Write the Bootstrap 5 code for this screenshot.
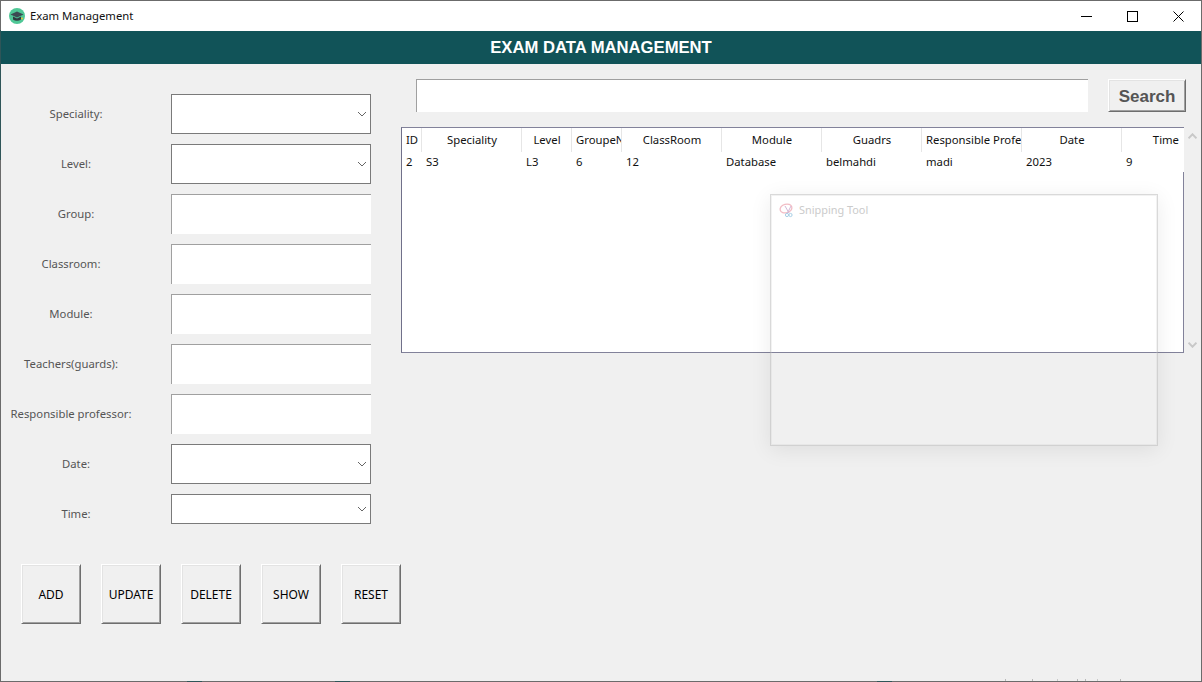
<!DOCTYPE html>
<html lang="en">
<head>
<meta charset="utf-8">
<title>Exam Management</title>
<link href="https://cdn.jsdelivr.net/npm/bootstrap@5.3.0/dist/css/bootstrap.min.css" rel="stylesheet">
<style>
html,body{margin:0;height:682px;overflow:hidden;background:#f0f0f0}
body{font-family:"Noto Sans","Liberation Sans",sans-serif;font-size:12px;color:#000}
.win{width:1202px;height:682px;border:1px solid #6b6b6b;position:relative;background:#f0f0f0}
.tbar{height:30px;background:#fff;padding-left:8px}
.tbar-title{font-size:11.3px;margin-left:5px;color:#111}
.wbtn{width:46px;height:30px}
.hdr{height:33px;padding-top:1px;background:#115358;color:#fff;font-family:"Liberation Sans",sans-serif;font-weight:700;font-size:16.65px}
.pane-left{width:400px;flex:none;padding-top:30px}
.frow{height:40px;margin-bottom:10px}
.frow-sm{margin-bottom:30px}
.flabel{width:170px;padding:0 20px 0 0;text-align:center;color:#555;font-size:11.3px;flex:none}
.flabel-off{padding-right:30px}
.fbox{width:200px;height:100%;background:#fff;flex:none}
.fbox-short{height:30px;align-self:flex-start}
.fbox-sel{border:1px solid #7a7a7a;padding-right:3px}
.fbox-txt{border-top:1px solid #a0a0a0;border-left:1px solid #a0a0a0}
.btnrow{gap:20px;padding-left:20px}
.winbtn{width:60px;height:60px;flex:none;padding:1px 0 0;border-radius:0;background:#f0f0f0;font-size:12px;color:#000;border:1px solid;border-color:#fff #6e6e6e #6e6e6e #fff;box-shadow:inset 1px 1px 0 #e3e3e3,inset -1px -1px 0 #a0a0a0}
.pane-right{flex:1;padding-top:15px}
.srch{padding-left:15px;height:33px}
.srch-in{width:672px;height:33px;background:#fff;border-top:1px solid #a0a0a0;border-left:1px solid #a0a0a0}
.srch-btn{width:78px;height:33px;margin-left:20px;padding:2px 0 0;border-radius:0;background:#f0f0f0;color:#555;font-family:"Liberation Sans",sans-serif;font-weight:700;font-size:17px;border:1px solid;border-color:#fff #6e6e6e #6e6e6e #fff;box-shadow:inset 1px 1px 0 #e3e3e3,inset -1px -1px 0 #a0a0a0}
.tblwrap{margin-top:15px}
.tbox{width:783px;height:226px;flex:none;background:#fff;border:1px solid #82829a;border-left-color:#70708a}
.tcell{flex:none;padding:0 3px 0 4px;overflow:hidden;white-space:nowrap;color:#111;font-size:11.3px}
.thead-row{height:24px;line-height:24px;margin-right:-1px;position:relative;background:#fff}
.thead-row .tcell{text-align:center;border-right:1px solid #e6e6e6}
.tbody-row{height:20px;line-height:20px;margin-right:-1px;position:relative;background:#fff}
.w20{width:20px}.w50{width:50px}.w100{width:100px}.wlast{width:62px}
.thead-row .wlast{text-align:right;border-right:0;padding-right:5px}
.sbar{width:16px;height:226px;padding:6px 0 5px}
.ghost{position:absolute;left:769px;top:193px;width:388px;height:252px;border:1px solid rgba(170,170,170,.45);box-shadow:inset 0 0 0 1px rgba(205,205,205,.25),0 4px 20px rgba(0,0,0,.08)}
.ghost-title{color:#cbcbcb;font-size:10.9px;padding:7px 0 0 8px;gap:4px}
.bleed{position:absolute;height:1px;bottom:-1px}
.bl-a{left:186px;width:15px;background:#2f5558}
.bl-b{left:334px;width:15px;background:#2f5558}
.bl-c{left:876px;width:15px;background:#2f5558}
.spk{position:absolute;left:1004px;bottom:0;width:1px;height:2px;background:#b8b8b8;box-shadow:27px 0 #b8b8b8,52px 0 #c8c8c8,72px 0 #b8b8b8,80px 0 #b8b8b8,92px 0 #c8c8c8,115px 0 #b8b8b8}
.edge-l{position:absolute;left:-1px;top:29px;width:1px;height:130px;background:#2f5558}
</style>
</head>
<body>
<div class="win">
  <div class="tbar d-flex align-items-center">
    <svg width="16" height="16" viewBox="0 0 16 16"><circle cx="8" cy="8" r="8" fill="#4fc796"/><path d="M1.500 6.500 8 3.500l6.500 3L8 9.500z" fill="#3c4a52"/><path d="M4 8.500v3c2.500 1.800 5.500 1.800 8 0v-3L8 10.500z" fill="#2f3a40"/><circle cx="13" cy="10.500" r="1" fill="#e6c63a"/></svg>
    <span class="tbar-title">Exam Management</span>
    <div class="ms-auto d-flex">
      <div class="wbtn d-flex align-items-center justify-content-center"><svg width="11" height="11" viewBox="0 0 11 11"><path d="M0 5.500h11" stroke="#000"/></svg></div>
      <div class="wbtn d-flex align-items-center justify-content-center"><svg width="11" height="11" viewBox="0 0 11 11"><rect x=".5" y=".5" width="10" height="10" fill="none" stroke="#000"/></svg></div>
      <div class="wbtn d-flex align-items-center justify-content-center"><svg width="11" height="11" viewBox="0 0 11 11"><path d="M.5.500l10 10M10.500.500l-10 10" stroke="#000" fill="none"/></svg></div>
    </div>
  </div>
  <div class="hdr d-flex align-items-center justify-content-center">EXAM DATA MANAGEMENT</div>
  <div class="d-flex">
    <div class="pane-left">
      <div class="frow d-flex align-items-center"><div class="flabel">Speciality:</div><div class="fbox fbox-sel d-flex align-items-center justify-content-end"><svg width="11" height="6" viewBox="0 0 11 6"><path d="M2 1l4 4 4-4" fill="none" stroke="#666"/></svg></div></div>
      <div class="frow d-flex align-items-center"><div class="flabel">Level:</div><div class="fbox fbox-sel d-flex align-items-center justify-content-end"><svg width="11" height="6" viewBox="0 0 11 6"><path d="M2 1l4 4 4-4" fill="none" stroke="#666"/></svg></div></div>
      <div class="frow d-flex align-items-center"><div class="flabel">Group:</div><div class="fbox fbox-txt"></div></div>
      <div class="frow d-flex align-items-center"><div class="flabel flabel-off">Classroom:</div><div class="fbox fbox-txt"></div></div>
      <div class="frow d-flex align-items-center"><div class="flabel flabel-off">Module:</div><div class="fbox fbox-txt"></div></div>
      <div class="frow d-flex align-items-center"><div class="flabel flabel-off">Teachers(guards):</div><div class="fbox fbox-txt"></div></div>
      <div class="frow d-flex align-items-center"><div class="flabel flabel-off">Responsible professor:</div><div class="fbox fbox-txt"></div></div>
      <div class="frow d-flex align-items-center"><div class="flabel">Date:</div><div class="fbox fbox-sel d-flex align-items-center justify-content-end"><svg width="11" height="6" viewBox="0 0 11 6"><path d="M2 1l4 4 4-4" fill="none" stroke="#666"/></svg></div></div>
      <div class="frow frow-sm d-flex align-items-center"><div class="flabel">Time:</div><div class="fbox fbox-short fbox-sel d-flex align-items-center justify-content-end"><svg width="11" height="6" viewBox="0 0 11 6"><path d="M2 1l4 4 4-4" fill="none" stroke="#666"/></svg></div></div>
      <div class="btnrow d-flex">
        <button type="button" class="btn winbtn">ADD</button>
        <button type="button" class="btn winbtn">UPDATE</button>
        <button type="button" class="btn winbtn">DELETE</button>
        <button type="button" class="btn winbtn">SHOW</button>
        <button type="button" class="btn winbtn">RESET</button>
      </div>
    </div>
    <div class="pane-right">
      <div class="srch d-flex">
        <div class="srch-in"></div>
        <button type="button" class="btn srch-btn">Search</button>
      </div>
      <div class="tblwrap d-flex">
        <div class="tbox">
          <div class="thead-row d-flex">
            <div class="tcell w20">ID</div><div class="tcell w100">Speciality</div><div class="tcell w50">Level</div><div class="tcell w50">GroupeN</div><div class="tcell w100">ClassRoom</div><div class="tcell w100">Module</div><div class="tcell w100">Guadrs</div><div class="tcell w100">Responsible Professor</div><div class="tcell w100">Date</div><div class="tcell wlast">Time</div>
          </div>
          <div class="tbody-row d-flex">
            <div class="tcell w20">2</div><div class="tcell w100">S3</div><div class="tcell w50">L3</div><div class="tcell w50">6</div><div class="tcell w100">12</div><div class="tcell w100">Database</div><div class="tcell w100">belmahdi</div><div class="tcell w100">madi</div><div class="tcell w100">2023</div><div class="tcell wlast">9</div>
          </div>
        </div>
        <div class="sbar d-flex flex-column justify-content-between align-items-center">
          <svg width="9" height="6" viewBox="0 0 9 6"><path d="M.5 5.300 4.500 1.300l4 4" fill="none" stroke="#c8c8c8" stroke-width="2"/></svg>
          <svg width="9" height="6" viewBox="0 0 9 6"><path d="M.5.700l4 4 4-4" fill="none" stroke="#c8c8c8" stroke-width="2"/></svg>
        </div>
      </div>
    </div>
  </div>
  <div class="ghost">
    <div class="ghost-title d-flex align-items-center">
      <svg width="16" height="15" viewBox="0 0 16 15"><ellipse cx="7" cy="5.500" rx="6" ry="4.300" fill="none" stroke="#f2bcc4" stroke-width="1.300" transform="rotate(-15 7 5.500)"/><path d="M6 3l4 7M12 3 8.500 10" stroke="#d2b8d6" fill="none"/><circle cx="8" cy="12" r="1.600" fill="none" stroke="#a8cfe6"/><circle cx="11.500" cy="12" r="1.600" fill="none" stroke="#a8cfe6"/></svg>
      <span>Snipping Tool</span>
    </div>
  </div>
  <div class="edge-l"></div>
  <div class="bleed bl-a"></div>
  <div class="bleed bl-b"></div>
  <div class="bleed bl-c"></div>
  <div class="spk"></div>
</div>
</body>
</html>
